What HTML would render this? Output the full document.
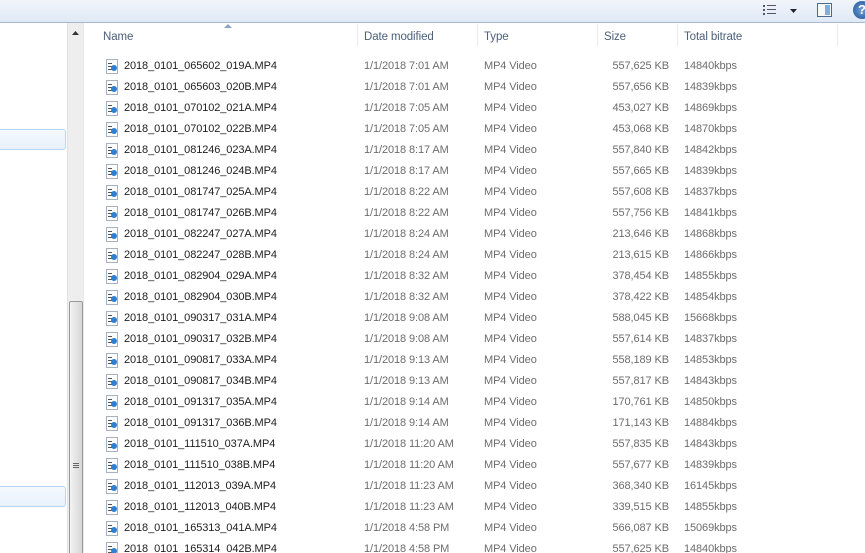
<!DOCTYPE html>
<html><head><style>
*{margin:0;padding:0;box-sizing:border-box}
html,body{width:865px;height:553px;overflow:hidden}
body{background:#fff;font-family:"Liberation Sans",sans-serif;font-size:11px;letter-spacing:-0.1px;color:#1e1e1e;position:relative}
.tb{position:absolute;left:0;top:0;width:865px;height:23px;background:linear-gradient(#f1f5fb,#dfe9f5);border-bottom:1px solid #a9b8cc}
.nav{position:absolute;left:0;top:23px;width:67px;height:530px;background:#fff}
.sel{position:absolute;left:-3px;width:69px;height:21px;border:1px solid #b8d6f3;border-radius:3px;background:linear-gradient(#f4f9fe,#e8f1fb)}
.sb{position:absolute;left:67px;top:23px;width:17px;height:540px;background:#eeeeee;border-left:1px solid #e2e2e2;border-right:1px solid #e8e8e8}
.thumb{position:absolute;left:1px;top:278px;width:14px;height:280px;border:1px solid #9a9a9a;border-radius:2px;background:linear-gradient(90deg,#f3f3f3,#e2e2e2 60%,#d6d6d6)}
.hd{position:absolute;top:24px;height:24px;line-height:26px;color:#4c607a;font-size:11.5px}
.sep{position:absolute;top:24px;width:1px;height:22px;background:#e8ecf1}
.row{position:absolute;left:86px;width:779px;height:21px;line-height:21px;color:#333}
.row span{position:absolute;white-space:nowrap}
.ic{position:absolute;left:20px;top:3px;width:12px;height:15px;border:1px solid #a8b0bc;background:#fbfcfd}
.ic:after{content:"";position:absolute;left:4px;top:5px;width:6px;height:6px;border-radius:50%;background:#2f7fd0}
.ic:before{content:"";position:absolute;left:1px;top:3px;width:4px;height:5px;border-top:1px solid #555;border-bottom:1px solid #555;background:linear-gradient(#fff 40%,#555 40%,#555 60%,#fff 60%)}
.c1{left:38px;color:#1e1e1e}.c2{left:278px;color:#6d6d6d}.c3{left:398px;color:#6d6d6d}.c4{right:196px;color:#6d6d6d}.c5{left:598px;color:#6d6d6d}
</style></head><body>
<div class="tb">
<svg style="position:absolute;left:762px;top:4px" width="40" height="14"><g fill="#556"><rect x="1" y="1" width="2" height="2"/><rect x="1" y="5" width="2" height="2"/><rect x="1" y="9" width="2" height="2"/><rect x="5" y="1" width="9" height="1"/><rect x="5" y="5" width="9" height="1"/><rect x="5" y="9" width="9" height="1"/><path d="M28 5h7l-3.5 4z" fill="#223"/></g></svg>
<svg style="position:absolute;left:817px;top:3px" width="16" height="16"><rect x="0.5" y="0.5" width="14" height="13" fill="#f6f9fc" stroke="#4a6a8e"/><rect x="8" y="2" width="5" height="10" fill="#7fb0dc"/></svg>
<div style="position:absolute;left:853px;top:1px;width:18px;height:18px;border-radius:50%;background:radial-gradient(#6fa0d8,#1d4f94);color:#fff;font-weight:bold;font-size:13px;line-height:18px;padding-left:5px">?</div>
</div>
<div class="nav"><div class="sel" style="top:106px"></div><div class="sel" style="top:463px"></div></div>
<div class="sb"><svg style="position:absolute;left:4px;top:8px" width="8" height="5"><path d="M0 4h7L3.5 0z" fill="#333"/></svg><div class="thumb"><div style="position:absolute;left:3px;top:161px;width:6px;height:5px;border-top:1px solid #666;border-bottom:1px solid #666"></div><div style="position:absolute;left:3px;top:163px;width:6px;height:1px;background:#666"></div></div></div>
<svg style="position:absolute;left:224px;top:24px" width="8" height="4"><path d="M0 4l4-4 4 4z" fill="#8aa3c2"/></svg>
<div class="hd" style="left:103px">Name</div>
<div class="sep" style="left:357px"></div><div class="hd" style="left:364px">Date modified</div>
<div class="sep" style="left:477px"></div><div class="hd" style="left:484px">Type</div>
<div class="sep" style="left:597px"></div><div class="hd" style="left:604px">Size</div>
<div class="sep" style="left:677px"></div><div class="hd" style="left:684px">Total bitrate</div>
<div class="sep" style="left:837px"></div>
<div id="rows"></div>
<script>
var d=[["065602_019A","7:01 AM","557,625","14840"],["065603_020B","7:01 AM","557,656","14839"],["070102_021A","7:05 AM","453,027","14869"],["070102_022B","7:05 AM","453,068","14870"],["081246_023A","8:17 AM","557,840","14842"],["081246_024B","8:17 AM","557,665","14839"],["081747_025A","8:22 AM","557,608","14837"],["081747_026B","8:22 AM","557,756","14841"],["082247_027A","8:24 AM","213,646","14868"],["082247_028B","8:24 AM","213,615","14866"],["082904_029A","8:32 AM","378,454","14855"],["082904_030B","8:32 AM","378,422","14854"],["090317_031A","9:08 AM","588,045","15668"],["090317_032B","9:08 AM","557,614","14837"],["090817_033A","9:13 AM","558,189","14853"],["090817_034B","9:13 AM","557,817","14843"],["091317_035A","9:14 AM","170,761","14850"],["091317_036B","9:14 AM","171,143","14884"],["111510_037A","11:20 AM","557,835","14843"],["111510_038B","11:20 AM","557,677","14839"],["112013_039A","11:23 AM","368,340","16145"],["112013_040B","11:23 AM","339,515","14855"],["165313_041A","4:58 PM","566,087","15069"],["165314_042B","4:58 PM","557,625","14840"]];
var h="";d.forEach(function(r,i){h+='<div class="row" style="top:'+(56+i*21)+'px"><div class="ic"></div><span class="c1">2018_0101_'+r[0]+'.MP4</span><span class="c2">1/1/2018 '+r[1]+'</span><span class="c3">MP4 Video</span><span class="c4">'+r[2]+' KB</span><span class="c5">'+r[3]+'kbps</span></div>'});
document.getElementById("rows").innerHTML=h;
</script>
</body></html>
